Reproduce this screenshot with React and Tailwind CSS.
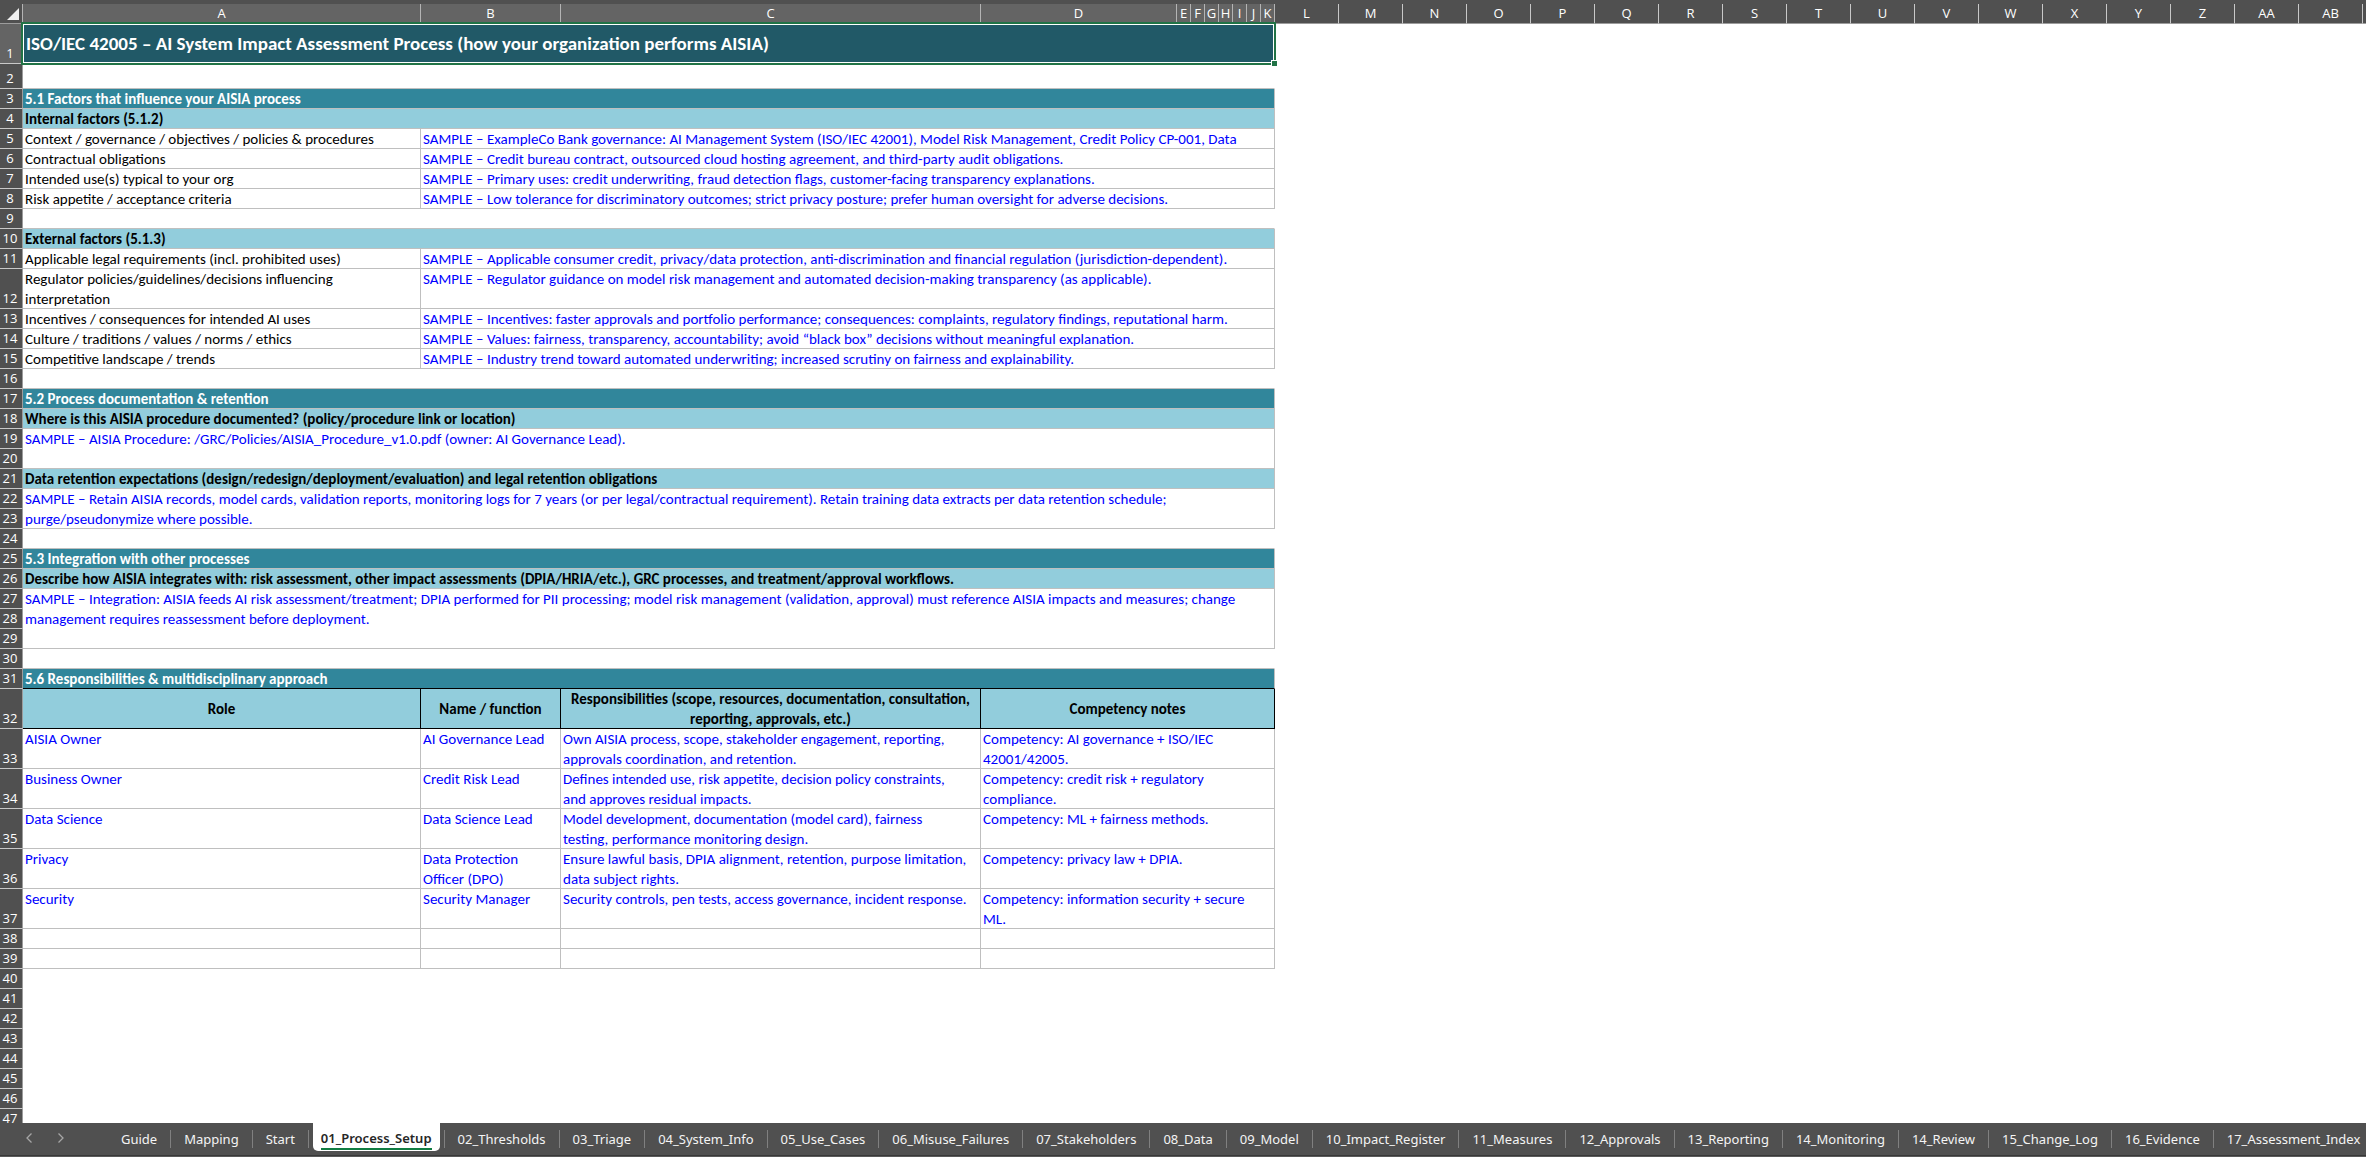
const HEAD_COLUMNS = ["A", "B", "C", "D", "E", "F", "G", "H", "I", "J", "K"];
const FREE_COLUMNS = ["L", "M", "N", "O", "P", "Q", "R", "S", "T", "U", "V", "W", "X", "Y", "Z", "AA", "AB"];

const COLUMN_WIDTHS = ["w-[23px]", "w-[398px]", "w-[140px]", "w-[420px]", "w-[196px]"];

const band = (text) => ({ cells: [{ text, span: 11, kind: "section" }] });
const subBand = (text) => ({ cells: [{ text, span: 11, kind: "group" }] });
const gap = () => ({ cells: [{ text: "", span: 11, kind: "gap" }] });
const factor = (label, sample, tall) => ({
  tall,
  cells: [
    { text: label, span: 1, kind: "label" },
    { text: sample, span: 10, kind: "sample" },
  ],
});
const note = (text, rows) => ({ cells: [{ text, span: 11, rows, kind: "sample" }] });
const merged = () => ({ cells: [] });
const person = (role, name, duties, competency) => ({
  tall: true,
  cells: [
    { text: role, span: 1, kind: "sample" },
    { text: name, span: 1, kind: "sample" },
    { text: duties, span: 1, kind: "sample" },
    { text: competency, span: 8, kind: "sample" },
  ],
});

const ROWS = [
  band("5.1 Factors that influence your AISIA process"),
  subBand("Internal factors (5.1.2)"),
  factor(
    "Context / governance / objectives / policies & procedures",
    "SAMPLE – ExampleCo Bank governance: AI Management System (ISO/IEC 42001), Model Risk Management, Credit Policy CP-001, Data"
  ),
  factor(
    "Contractual obligations",
    "SAMPLE – Credit bureau contract, outsourced cloud hosting agreement, and third-party audit obligations."
  ),
  factor(
    "Intended use(s) typical to your org",
    "SAMPLE – Primary uses: credit underwriting, fraud detection flags, customer-facing transparency explanations."
  ),
  factor(
    "Risk appetite / acceptance criteria",
    "SAMPLE – Low tolerance for discriminatory outcomes; strict privacy posture; prefer human oversight for adverse decisions."
  ),
  gap(),
  subBand("External factors (5.1.3)"),
  factor(
    "Applicable legal requirements (incl. prohibited uses)",
    "SAMPLE – Applicable consumer credit, privacy/data protection, anti-discrimination and financial regulation (jurisdiction-dependent)."
  ),
  factor(
    "Regulator policies/guidelines/decisions influencing\ninterpretation",
    "SAMPLE – Regulator guidance on model risk management and automated decision-making transparency (as applicable).",
    true
  ),
  factor(
    "Incentives / consequences for intended AI uses",
    "SAMPLE – Incentives: faster approvals and portfolio performance; consequences: complaints, regulatory findings, reputational harm."
  ),
  factor(
    "Culture / traditions / values / norms / ethics",
    "SAMPLE – Values: fairness, transparency, accountability; avoid “black box” decisions without meaningful explanation."
  ),
  factor(
    "Competitive landscape / trends",
    "SAMPLE – Industry trend toward automated underwriting; increased scrutiny on fairness and explainability."
  ),
  gap(),
  band("5.2 Process documentation & retention"),
  subBand("Where is this AISIA procedure documented? (policy/procedure link or location)"),
  note("SAMPLE – AISIA Procedure: /GRC/Policies/AISIA_Procedure_v1.0.pdf (owner: AI Governance Lead).", 2),
  merged(),
  subBand("Data retention expectations (design/redesign/deployment/evaluation) and legal retention obligations"),
  note(
    "SAMPLE – Retain AISIA records, model cards, validation reports, monitoring logs for 7 years (or per legal/contractual requirement). Retain training data extracts per data retention schedule;\npurge/pseudonymize where possible.",
    2
  ),
  merged(),
  gap(),
  band("5.3 Integration with other processes"),
  subBand(
    "Describe how AISIA integrates with: risk assessment, other impact assessments (DPIA/HRIA/etc.), GRC processes, and treatment/approval workflows."
  ),
  note(
    "SAMPLE – Integration: AISIA feeds AI risk assessment/treatment; DPIA performed for PII processing; model risk management (validation, approval) must reference AISIA impacts and measures; change\nmanagement requires reassessment before deployment.",
    3
  ),
  merged(),
  merged(),
  gap(),
  { cells: [{ text: "5.6 Responsibilities & multidisciplinary approach", span: 11, kind: "sectionDark" }] },
  {
    tall: true,
    cells: [
      { text: "Role", span: 1, kind: "heading" },
      { text: "Name / function", span: 1, kind: "heading" },
      {
        text: "Responsibilities (scope, resources, documentation, consultation,\nreporting, approvals, etc.)",
        span: 1,
        kind: "heading",
      },
      { text: "Competency notes", span: 8, kind: "heading" },
    ],
  },
  person(
    "AISIA Owner",
    "AI Governance Lead",
    "Own AISIA process, scope, stakeholder engagement, reporting,\napprovals coordination, and retention.",
    "Competency: AI governance + ISO/IEC\n42001/42005."
  ),
  person(
    "Business Owner",
    "Credit Risk Lead",
    "Defines intended use, risk appetite, decision policy constraints,\nand approves residual impacts.",
    "Competency: credit risk + regulatory\ncompliance."
  ),
  person(
    "Data Science",
    "Data Science Lead",
    "Model development, documentation (model card), fairness\ntesting, performance monitoring design.",
    "Competency: ML + fairness methods."
  ),
  person(
    "Privacy",
    "Data Protection\nOfficer (DPO)",
    "Ensure lawful basis, DPIA alignment, retention, purpose limitation,\ndata subject rights.",
    "Competency: privacy law + DPIA."
  ),
  person(
    "Security",
    "Security Manager",
    "Security controls, pen tests, access governance, incident response.",
    "Competency: information security + secure\nML."
  ),
  { ...person("", "", "", ""), tall: false },
  { ...person("", "", "", ""), tall: false },
  ...Array.from({ length: 8 }, merged),
];

const KIND_CLASSES = {
  section: "border-[#bfbfbf] bg-[#31869b] font-bold text-white",
  sectionDark: "border-r-[#bfbfbf] border-b-black bg-[#31869b] font-bold text-white",
  group: "border-[#bfbfbf] bg-[#92cddc] font-bold text-black",
  label: "border-[#bfbfbf] text-black",
  sample: "border-[#bfbfbf] text-[#0000ff]",
  gap: "border-b-[#bfbfbf] border-r-transparent",
  heading: "border-black bg-[#92cddc] text-center font-bold text-black",
};

const SHEETS_BEFORE = ["Guide", "Mapping", "Start"];
const SHEETS_AFTER = [
  "02_Thresholds", "03_Triage", "04_System_Info", "05_Use_Cases", "06_Misuse_Failures", "07_Stakeholders",
  "08_Data", "09_Model", "10_Impact_Register", "11_Measures", "12_Approvals", "13_Reporting",
  "14_Monitoring", "14_Review", "15_Change_Log", "16_Evidence", "17_Assessment_Index",
];

const ROW_HEADER =
  "border-r border-b border-r-[#9c9c9c] border-b-[#c8c8c8] p-0 text-center align-bottom font-['Open_Sans','Noto_Sans',sans-serif] text-[13px] font-normal leading-5 text-white";

function RowNumber({ n, tone = "bg-[#505050]" }) {
  return (
    <th scope="row" className={`${ROW_HEADER} ${tone}`}>
      <div className="-mt-px pr-0.5">{n}</div>
    </th>
  );
}

function Cell({ cell }) {
  const Tag = cell.kind === "heading" ? "th" : "td";
  return (
    <Tag
      colSpan={cell.span}
      rowSpan={cell.rows}
      className={`border-r border-b p-0 text-[15px] leading-5 whitespace-pre ${
        cell.kind === "heading" ? "align-middle" : "align-top"
      } ${KIND_CLASSES[cell.kind]}`}
    >
      <div className="-mb-px px-0.5">{cell.text}</div>
    </Tag>
  );
}

function ColumnHeaders() {
  const shared = "border-r p-0 text-center text-[13px] font-normal leading-[19px] text-white";
  return (
    <thead className="font-['Open_Sans','Noto_Sans',sans-serif]">
      <tr className="h-5">
        <th className="border-r border-b border-r-[#b4b4b4] border-b-[#9c9c9c] bg-[#505050] p-0">
          <button type="button" aria-label="Select all cells" className="flex w-full justify-end pr-[3px]">
            <svg viewBox="0 0 12 12" className="size-3 fill-[#f0f0f0]">
              <path d="M12 0v12H0z" />
            </svg>
          </button>
        </th>
        {HEAD_COLUMNS.map((c) => (
          <th key={c} scope="col" className={`${shared} border-b border-b-[#9c9c9c] border-r-[#b4b4b4] bg-[#646464]`}>
            {c}
          </th>
        ))}
        {FREE_COLUMNS.map((c) => (
          <th key={c} scope="col" className={`${shared} border-b border-b-[#9c9c9c] border-r-[#c8c8c8] bg-[#505050]`}>
            {c}
          </th>
        ))}
        <th className="border-b border-b-[#9c9c9c] bg-[#505050] p-0" />
      </tr>
    </thead>
  );
}

function Sheet() {
  return (
    <table className="w-full table-fixed border-separate border-spacing-0 text-left">
      <colgroup>
        {COLUMN_WIDTHS.map((w) => (
          <col key={w} className={w} />
        ))}
        {HEAD_COLUMNS.slice(4).map((c) => (
          <col key={c} className="w-3.5" />
        ))}
        {FREE_COLUMNS.map((c) => (
          <col key={c} className="w-16" />
        ))}
        <col />
      </colgroup>
      <ColumnHeaders />
      <tbody>
        <tr className="h-10">
          <RowNumber n={1} tone="bg-[#646464]" />
          <td
            colSpan={11}
            className="relative bg-[#215967] p-0 px-[3px] align-middle text-[19px] font-bold leading-6 whitespace-pre text-white"
          >
            ISO/IEC 42005 – AI System Impact Assessment Process (how your organization performs AISIA)
            <div className="absolute -top-0.5 -right-px -bottom-px -left-0.5 border-2 border-[#217346]">
              <div className="h-full border border-white" />
            </div>
            <div className="absolute -right-[2px] -bottom-[2px] size-1.5 border-t border-l border-white bg-[#217346]" />
          </td>
        </tr>
        <tr className="h-[25px]">
          <RowNumber n={2} />
          <Cell cell={{ text: "", span: 11, kind: "gap" }} />
        </tr>
        {ROWS.map((row, i) => (
          <tr key={i} className={row.tall ? "h-10" : "h-5"}>
            <RowNumber n={i + 3} />
            {row.cells.map((cell, j) => (
              <Cell key={j} cell={cell} />
            ))}
          </tr>
        ))}
      </tbody>
    </table>
  );
}

function Divider() {
  return <span className="mt-[7px] h-[18px] w-px shrink-0 bg-[#808080]" />;
}

function SheetTab({ name }) {
  return (
    <button type="button" role="tab" aria-selected="false" className="h-8 shrink-0 px-[13px] leading-8 whitespace-nowrap">
      {name}
    </button>
  );
}

function SheetTabs() {
  return (
    <footer className="flex h-[34px] shrink-0 items-start overflow-hidden border-b border-[#5a5a5a] bg-[#505050] font-['Noto_Sans','Open_Sans',sans-serif] text-[13px] text-[#f4f4f4] shadow-[inset_0_-1px_0_#383838]">
      <div className="flex w-[108px] shrink-0 items-center gap-5 pt-[9px] pl-[23px]">
        <button type="button" aria-label="Previous sheet">
          <svg viewBox="0 0 12 12" className="size-3 fill-none stroke-[#a6a6a6] stroke-[1.3]">
            <path d="M8.5 1.5 4 6l4.5 4.5" />
          </svg>
        </button>
        <button type="button" aria-label="Next sheet">
          <svg viewBox="0 0 12 12" className="size-3 fill-none stroke-[#a6a6a6] stroke-[1.3]">
            <path d="M3.5 1.5 8 6l-4.5 4.5" />
          </svg>
        </button>
      </div>
      <div role="tablist" aria-label="Sheets" className="flex items-start">
        {SHEETS_BEFORE.map((name) => (
          <div key={name} className="flex items-start">
            <SheetTab name={name} />
            <Divider />
          </div>
        ))}
        <button
          type="button"
          role="tab"
          aria-selected="true"
          className="mx-1 h-7 shrink-0 rounded-b-[5px] bg-white px-2 pt-1 font-semibold text-[#262626]"
        >
          <span className="block h-[21px] border-b-2 border-[#107c41] leading-[19px]">01_Process_Setup</span>
        </button>
        <Divider />
        {SHEETS_AFTER.map((name, i) => (
          <div key={name} className="flex items-start">
            <SheetTab name={name} />
            {i < SHEETS_AFTER.length - 1 && <Divider />}
          </div>
        ))}
      </div>
    </footer>
  );
}

export default function App() {
  return (
    <div className="flex h-screen flex-col overflow-hidden bg-white font-[Calibri,Carlito,Lato,sans-serif]">
      <div className="h-1 shrink-0 bg-[#505050]" />
      <main className="min-h-0 flex-1 overflow-hidden">
        <Sheet />
      </main>
      <SheetTabs />
    </div>
  );
}
